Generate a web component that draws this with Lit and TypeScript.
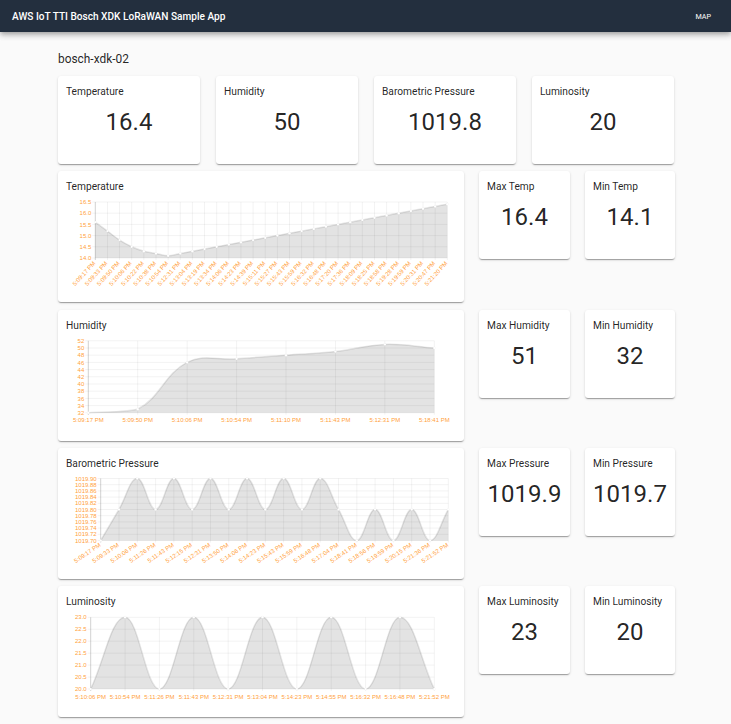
import { LitElement, html, svg, css } from 'lit';
import { customElement, property } from 'lit/decorators.js';

interface ChartSpec {
  title: string;
  labels: string[];
  values: number[];
  ticks: number[];
  decimals: number;
  left: number;
  right: number;
  top: number;
  bottom: number;
  rotate: number;
}

const pm = (s: string) => s.split(' ').map((t) => `5:${t} PM`);

const range = (from: number, step: number, n: number) =>
  Array.from({ length: n }, (_, i) => from + step * i);

// plot rects are relative to the svg, which sits 8px / 26px into the card
const CHARTS: { spec: ChartSpec; max: [string, string]; min: [string, string] }[] = [
  {
    spec: {
      title: 'Temperature',
      labels: pm(
        '09:17 09:33 09:50 10:06 10:22 10:38 10:54 12:31 13:04 13:19 13:34 14:06 14:23 14:39 15:11 15:27 15:43 15:59 16:32 16:48 17:20 17:36 18:09 18:25 18:58 19:28 19:59 20:31 20:47 21:20'
      ),
      values: [
        15.6, 15.2, 14.8, 14.5, 14.3, 14.2, 14.1, 14.2, 14.3, 14.4, 14.5, 14.6, 14.7, 14.8, 14.9,
        15.0, 15.1, 15.2, 15.3, 15.4, 15.5, 15.6, 15.7, 15.8, 15.9, 16.0, 16.1, 16.2, 16.3, 16.4,
      ],
      ticks: range(14, 0.5, 6),
      decimals: 1,
      left: 29.3,
      right: 381.3,
      top: 5,
      bottom: 61,
      rotate: -48,
    },
    max: ['Max Temp', '16.4'],
    min: ['Min Temp', '14.1'],
  },
  {
    spec: {
      title: 'Humidity',
      labels: pm('09:17 09:50 10:06 10:54 11:10 11:43 12:31 18:41'),
      values: [32, 33, 46, 47, 48, 49, 51, 50],
      ticks: range(32, 2, 11),
      decimals: 0,
      left: 22.3,
      right: 368.3,
      top: 4.8,
      bottom: 76.8,
      rotate: 0,
    },
    max: ['Max Humidity', '51'],
    min: ['Min Humidity', '32'],
  },
  {
    spec: {
      title: 'Barometric Pressure',
      labels: pm(
        '09:17 09:33 10:06 11:26 11:43 12:15 12:31 13:50 14:06 14:23 15:43 15:59 16:48 17:04 18:41 18:56 19:59 20:15 21:36 21:52'
      ),
      values: [
        1019.7, 1019.8, 1019.9, 1019.8, 1019.9, 1019.8, 1019.9, 1019.8, 1019.9, 1019.8, 1019.9,
        1019.8, 1019.9, 1019.8, 1019.7, 1019.8, 1019.7, 1019.8, 1019.7, 1019.8,
      ],
      ticks: range(1019.7, 0.02, 11),
      decimals: 2,
      left: 34.7,
      right: 382.3,
      top: 4.5,
      bottom: 66.5,
      rotate: -34,
    },
    max: ['Max Pressure', '1019.9'],
    min: ['Min Pressure', '1019.7'],
  },
  {
    spec: {
      title: 'Luminosity',
      labels: pm('10:06 10:54 11:26 11:43 12:31 13:04 14:23 14:55 16:32 16:48 21:52'),
      values: [20, 23, 20, 23, 20, 23, 20, 23, 20, 23, 20],
      ticks: range(20, 0.5, 7),
      decimals: 1,
      left: 24.7,
      right: 368.3,
      top: 5.3,
      bottom: 77,
      rotate: 0,
    },
    max: ['Max Luminosity', '23'],
    min: ['Min Luminosity', '20'],
  },
];

const LATEST: [string, string][] = [
  ['Temperature', '16.4'],
  ['Humidity', '50'],
  ['Barometric Pressure', '1019.8'],
  ['Luminosity', '20'],
];

// same curve as chart.js: cardinal spline with tension 0.4, control points capped to the plot
function splinePath(pts: [number, number][], top: number, bottom: number): string {
  const t = 0.4;
  const cap = (y: number) => Math.min(bottom, Math.max(top, y));
  const ctrl = pts.map((p, i) => {
    const prev = pts[i - 1] ?? p;
    const next = pts[i + 1] ?? p;
    const d01 = Math.hypot(p[0] - prev[0], p[1] - prev[1]);
    const d12 = Math.hypot(next[0] - p[0], next[1] - p[1]);
    const sum = d01 + d12 || 1;
    const fa = (t * d01) / sum;
    const fb = (t * d12) / sum;
    const dx = next[0] - prev[0];
    const dy = next[1] - prev[1];
    return {
      before: [p[0] - fa * dx, cap(p[1] - fa * dy)],
      after: [p[0] + fb * dx, cap(p[1] + fb * dy)],
    };
  });
  let d = `M${pts[0][0]} ${pts[0][1]}`;
  for (let i = 1; i < pts.length; i++) {
    const a = ctrl[i - 1].after;
    const b = ctrl[i].before;
    d += `C${a[0]} ${a[1]} ${b[0]} ${b[1]} ${pts[i][0]} ${pts[i][1]}`;
  }
  return d;
}

@customElement('line-chart')
export class LineChart extends LitElement {
  static styles = css`
    :host {
      display: block;
    }
    svg {
      display: block;
    }
    text {
      font-family: 'Liberation Sans', Arial, sans-serif;
      font-size: 6px;
      fill: #ff9f40;
    }
    .grid {
      stroke: rgba(0, 0, 0, 0.05);
      stroke-width: 1;
    }
    .axis {
      stroke: rgba(0, 0, 0, 0.18);
      stroke-width: 1;
    }
    .area {
      fill: rgba(0, 0, 0, 0.11);
      stroke: none;
    }
    .line {
      fill: none;
      stroke: rgba(0, 0, 0, 0.1);
      stroke-width: 1.5;
    }
    .point {
      fill: #fff;
      stroke: rgba(0, 0, 0, 0.05);
      stroke-width: 0.5;
    }
  `;

  @property({ attribute: false })
  spec!: ChartSpec;

  render() {
    const { labels, values, ticks, decimals, left, right, top, bottom, rotate } = this.spec;
    const lo = ticks[0];
    const hi = ticks[ticks.length - 1];
    const xAt = (i: number) => left + ((right - left) * i) / (labels.length - 1);
    const yAt = (v: number) => bottom - ((bottom - top) * (v - lo)) / (hi - lo);
    const pts = values.map((v, i) => [xAt(i), yAt(v)] as [number, number]);
    const curve = splinePath(pts, top, bottom);

    return html`<svg width="390" height="105" viewBox="0 0 390 105">
      ${ticks.map(
        (v) => svg`
          <line class="grid" x1=${left - 3} x2=${right} y1=${yAt(v)} y2=${yAt(v)}></line>
          <text x=${left - 4} y=${yAt(v) + 2.1} text-anchor="end">${v.toFixed(decimals)}</text>
        `
      )}
      ${labels.map((l, i) => {
        const x = xAt(i);
        return svg`
          <line class=${i === 0 ? 'axis' : 'grid'} x1=${x} x2=${x} y1=${top} y2=${bottom + 2}></line>
          ${
            rotate
              ? svg`<text transform="translate(${x + 0.5} ${bottom + 5.5}) rotate(${rotate})" text-anchor="end">${l}</text>`
              : svg`<text x=${x} y=${bottom + 9.6} text-anchor="middle">${l}</text>`
          }
        `;
      })}
      <path class="area" d="${curve}L${right} ${bottom}L${left} ${bottom}Z"></path>
      <path class="line" d=${curve}></path>
      ${pts.map((p) => svg`<circle class="point" cx=${p[0]} cy=${p[1]} r="1.2"></circle>`)}
    </svg>`;
  }
}

@customElement('app-root')
export class AppRoot extends LitElement {
  static styles = css`
    :host {
      display: block;
      min-height: 724px;
      background: #fafafa;
      font-family: Roboto, 'Liberation Sans', Arial, sans-serif;
      color: rgba(0, 0, 0, 0.87);
    }
    .toolbar {
      height: 32px;
      box-sizing: border-box;
      padding: 0 20px 0 12px;
      display: flex;
      align-items: center;
      justify-content: space-between;
      background: #232f3e;
      color: #fff;
      box-shadow: 0 2px 4px -1px rgba(0, 0, 0, 0.2), 0 4px 5px rgba(0, 0, 0, 0.14),
        0 1px 10px rgba(0, 0, 0, 0.12);
    }
    .brand {
      font-size: 10.1px;
      font-weight: 500;
    }
    .nav {
      font-size: 7.2px;
      font-weight: 400;
    }
    .page {
      width: 617px;
      margin-left: 58px;
      padding-top: 20px;
    }
    .device {
      font-size: 11.9px;
      line-height: 14px;
      margin-bottom: 10px;
    }
    .stack {
      display: flex;
      flex-direction: column;
      gap: 7.25px;
    }
    .latest {
      display: grid;
      grid-template-columns: repeat(4, 142px);
      column-gap: 16px;
    }
    .row {
      display: grid;
      grid-template-columns: 406px 91px 90px;
      column-gap: 15px;
      align-items: start;
    }
    .card {
      background: #fff;
      border-radius: 3px;
      box-sizing: border-box;
      padding: 8px;
      box-shadow: 0 2px 1px -1px rgba(0, 0, 0, 0.2), 0 1px 1px rgba(0, 0, 0, 0.14),
        0 1px 3px rgba(0, 0, 0, 0.12);
    }
    .stat {
      height: 88px;
    }
    .chart {
      height: 131px;
    }
    .title {
      font-size: 10.2px;
      line-height: 14px;
      margin-top: 1px;
      white-space: nowrap;
    }
    .value {
      font-size: 24px;
      line-height: 46px;
      text-align: center;
      white-space: nowrap;
    }
    line-chart {
      margin-top: 3px;
    }
    .row .stat {
      padding-right: 0;
    }
    .row .stat .value {
      margin-right: 8px;
    }
  `;

  private stat(name: string, value: string) {
    return html`<div class="card stat">
      <div class="title">${name}</div>
      <div class="value">${value}</div>
    </div>`;
  }

  render() {
    return html`
      <div class="toolbar">
        <span class="brand">AWS IoT TTI Bosch XDK LoRaWAN Sample App</span>
        <span class="nav">MAP</span>
      </div>
      <div class="page">
        <div class="device">bosch-xdk-02</div>
        <div class="stack">
          <div class="latest">${LATEST.map(([n, v]) => this.stat(n, v))}</div>
          ${CHARTS.map(
            (c) => html`<div class="row">
              <div class="card chart">
                <div class="title">${c.spec.title}</div>
                <line-chart .spec=${c.spec}></line-chart>
              </div>
              ${this.stat(c.max[0], c.max[1])} ${this.stat(c.min[0], c.min[1])}
            </div>`
          )}
        </div>
      </div>
    `;
  }
}
